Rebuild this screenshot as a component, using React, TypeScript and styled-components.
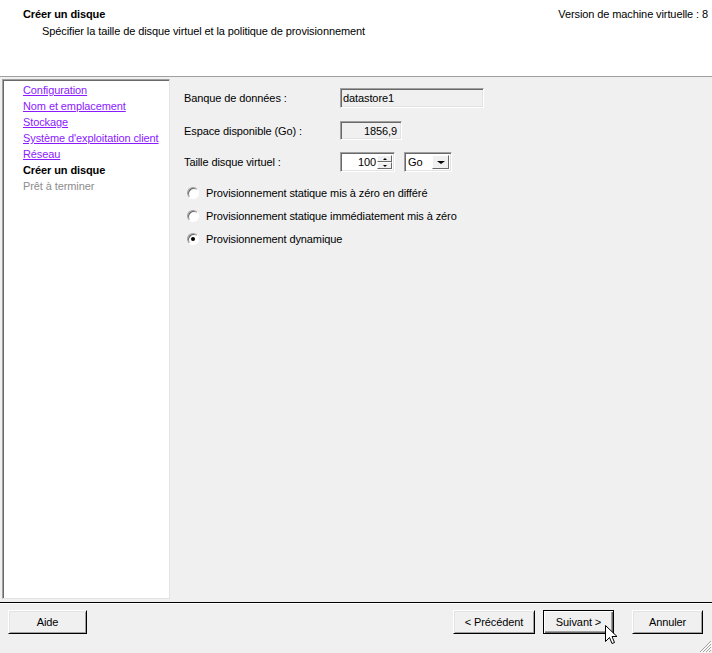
import React from 'react'
import styled, { createGlobalStyle } from 'styled-components'

const GlobalStyle = createGlobalStyle`
  html, body {
    margin: 0;
    padding: 0;
    background: #f0f0f0;
  }
  body {
    font-family: Tahoma, "Liberation Sans", Arial, sans-serif;
    font-size: 11px;
    letter-spacing: -0.1px;
    color: #000;
  }
`

const Window = styled.div`
  position: relative;
  width: 712px;
  height: 653px;
  display: flex;
  flex-direction: column;
  background: #f0f0f0;
  overflow: hidden;
`

const Header = styled.header`
  height: 77px;
  box-sizing: border-box;
  background: #fff;
  border-bottom: 1px solid #a0a0a0;
  display: flex;
  justify-content: space-between;
  align-items: flex-start;
  padding: 8px 4px 0 23px;
`

const HeaderText = styled.div`
  display: flex;
  flex-direction: column;
`

const Title = styled.div`
  font-weight: bold;
  line-height: 13px;
`

const Subtitle = styled.div`
  line-height: 13px;
  margin-top: 4px;
  padding-left: 19px;
`

const Version = styled.div`
  line-height: 13px;
`

const Body = styled.div`
  height: 525px;
  display: flex;
  padding: 2px 0 0 2px;
  box-sizing: border-box;
`

const NavPanel = styled.nav`
  width: 168px;
  height: 520px;
  box-sizing: border-box;
  background: #fff;
  border: 1px solid;
  border-color: #a0a0a0 #e3e3e3 #e3e3e3 #a0a0a0;
  box-shadow: inset 1px 1px 0 #696969;
  padding: 2px 0 0 20px;
  display: flex;
  flex-direction: column;
`

type NavState = 'done' | 'current' | 'todo'

const NavItem = styled.div<{ $state: NavState }>`
  line-height: 16px;
  white-space: nowrap;
  color: ${p => (p.$state === 'done' ? '#8b1aff' : p.$state === 'current' ? '#000' : '#8d8d8d')};
  text-decoration: ${p => (p.$state === 'done' ? 'underline' : 'none')};
  font-weight: ${p => (p.$state === 'current' ? 'bold' : 'normal')};
`

const Content = styled.section`
  flex: 1;
  padding: 9px 0 0 14px;
  display: flex;
  flex-direction: column;
`

const FieldRow = styled.div<{ $gap: number }>`
  display: flex;
  align-items: center;
  margin-bottom: ${p => p.$gap}px;
`

const Label = styled.div`
  width: 156px;
  flex-shrink: 0;
`

const Sunken = styled.div<{ $w: number; $h: number; $align?: string }>`
  width: ${p => p.$w}px;
  height: ${p => p.$h}px;
  box-sizing: border-box;
  background: #f0f0f0;
  border: 1px solid;
  border-color: #a0a0a0 #fff #fff #a0a0a0;
  box-shadow: inset 1px 1px 0 #696969, inset -1px -1px 0 #e3e3e3;
  display: flex;
  align-items: center;
  justify-content: ${p => (p.$align === 'right' ? 'flex-end' : 'flex-start')};
  padding: 0 4px 0 2px;
`

const SpinBox = styled.div`
  width: 55px;
  height: 20px;
  box-sizing: border-box;
  background: #fff;
  border: 1px solid;
  border-color: #a0a0a0 #fff #fff #a0a0a0;
  box-shadow: inset 1px 1px 0 #696969, inset -1px -1px 0 #e3e3e3;
  display: flex;
  align-items: stretch;
  padding: 2px;
`

const SpinValue = styled.div`
  flex: 1;
  text-align: right;
  line-height: 14px;
  padding-right: 1px;
`

const SpinButtons = styled.div`
  width: 15px;
  display: flex;
  flex-direction: column;
`

const SpinButton = styled.div`
  flex: 1;
  background: #f0f0f0;
  border: 1px solid;
  border-color: #fff #696969 #696969 #fff;
  display: flex;
  align-items: center;
  justify-content: center;
`

const Arrow = styled.span<{ $dir: 'up' | 'down'; $size: number }>`
  width: 0;
  height: 0;
  border-left: ${p => p.$size}px solid transparent;
  border-right: ${p => p.$size}px solid transparent;
  ${p =>
    p.$dir === 'up'
      ? `border-bottom: ${Math.ceil(p.$size / 2) + 1}px solid #000;`
      : `border-top: ${Math.ceil(p.$size / 2) + 1}px solid #000;`}
`

const Select = styled.div`
  width: 48px;
  height: 20px;
  margin-left: 9px;
  box-sizing: border-box;
  background: #fff;
  border: 1px solid;
  border-color: #a0a0a0 #fff #fff #a0a0a0;
  box-shadow: inset 1px 1px 0 #696969, inset -1px -1px 0 #e3e3e3;
  display: flex;
  align-items: stretch;
  padding: 2px;
`

const SelectValue = styled.div`
  flex: 1;
  line-height: 14px;
  padding-left: 1px;
`

const SelectButton = styled.div`
  width: 15px;
  background: #f0f0f0;
  border: 1px solid;
  border-color: #fff #696969 #696969 #fff;
  display: flex;
  align-items: center;
  justify-content: center;
`

const RadioGroup = styled.div`
  display: flex;
  flex-direction: column;
  margin-top: 9px;
  padding-left: 3px;
`

const RadioRow = styled.label`
  height: 23px;
  display: flex;
  align-items: center;
  gap: 7px;
`

const RadioCircle = styled.span<{ $checked: boolean }>`
  width: 12px;
  height: 12px;
  box-sizing: border-box;
  border-radius: 50%;
  border: 1px solid;
  border-color: #a0a0a0 #fff #fff #a0a0a0;
  background: #fff;
  box-shadow: inset 1px 1px 0 #696969;
  display: flex;
  align-items: center;
  justify-content: center;

  &::after {
    content: '';
    width: 4px;
    height: 4px;
    border-radius: 50%;
    background: #000;
    display: ${p => (p.$checked ? 'block' : 'none')};
  }
`

const Footer = styled.footer`
  position: relative;
  flex: 1;
  border-top: 1px solid #000;
  box-shadow: inset 0 1px 0 #fff;
  display: flex;
  align-items: flex-start;
  padding: 7px 9px 0 8px;
`

const Spacer = styled.div`
  flex: 1;
`

const Button = styled.div<{ $w: number; $default?: boolean; $ml?: number }>`
  width: ${p => p.$w}px;
  height: 24px;
  margin-left: ${p => p.$ml || 0}px;
  box-sizing: border-box;
  background: #f0f0f0;
  display: flex;
  align-items: center;
  justify-content: center;
  border: 1px solid;
  border-color: ${p => (p.$default ? '#000' : '#fff #000 #000 #fff')};
  box-shadow: ${p =>
    p.$default
      ? 'inset 1px 1px 0 #fff, inset -1px -1px 0 #696969, inset -2px -2px 0 #a0a0a0'
      : 'inset 1px 1px 0 #e3e3e3, inset -1px -1px 0 #a0a0a0'};
`

const Grip = styled.svg`
  position: absolute;
  right: 0;
  bottom: 0;
`

const Cursor = styled.svg`
  position: absolute;
  left: 605px;
  top: 625px;
`

const navItems: { label: string; state: NavState }[] = [
  { label: 'Configuration', state: 'done' },
  { label: 'Nom et emplacement', state: 'done' },
  { label: 'Stockage', state: 'done' },
  { label: "Système d'exploitation client", state: 'done' },
  { label: 'Réseau', state: 'done' },
  { label: 'Créer un disque', state: 'current' },
  { label: 'Prêt à terminer', state: 'todo' },
]

const radios = [
  { label: 'Provisionnement statique mis à zéro en différé', checked: false },
  { label: 'Provisionnement statique immédiatement mis à zéro', checked: false },
  { label: 'Provisionnement dynamique', checked: true },
]

const App = () => {
  return (
    <>
      <GlobalStyle />
      <Window>
        <Header>
          <HeaderText>
            <Title>Créer un disque</Title>
            <Subtitle>Spécifier la taille de disque virtuel et la politique de provisionnement</Subtitle>
          </HeaderText>
          <Version>Version de machine virtuelle : 8</Version>
        </Header>
        <Body>
          <NavPanel>
            {navItems.map(item => (
              <NavItem key={item.label} $state={item.state}>
                {item.label}
              </NavItem>
            ))}
          </NavPanel>
          <Content>
            <FieldRow $gap={13}>
              <Label>Banque de données :</Label>
              <Sunken $w={144} $h={20}>datastore1</Sunken>
            </FieldRow>
            <FieldRow $gap={12}>
              <Label>Espace disponible (Go) :</Label>
              <Sunken $w={62} $h={19} $align="right">1856,9</Sunken>
            </FieldRow>
            <FieldRow $gap={0}>
              <Label>Taille disque virtuel :</Label>
              <SpinBox>
                <SpinValue>100</SpinValue>
                <SpinButtons>
                  <SpinButton>
                    <Arrow $dir="up" $size={2} />
                  </SpinButton>
                  <SpinButton>
                    <Arrow $dir="down" $size={2} />
                  </SpinButton>
                </SpinButtons>
              </SpinBox>
              <Select>
                <SelectValue>Go</SelectValue>
                <SelectButton>
                  <Arrow $dir="down" $size={4} />
                </SelectButton>
              </Select>
            </FieldRow>
            <RadioGroup>
              {radios.map(r => (
                <RadioRow key={r.label}>
                  <RadioCircle $checked={r.checked} />
                  {r.label}
                </RadioRow>
              ))}
            </RadioGroup>
          </Content>
        </Body>
        <Footer>
          <Button $w={79}>Aide</Button>
          <Spacer />
          <Button $w={82}>&lt; Précédent</Button>
          <Button $w={71} $ml={8} $default>
            Suivant &gt;
          </Button>
          <Button $w={71} $ml={18}>
            Annuler
          </Button>
          <Grip width="13" height="13" viewBox="0 0 13 13">
            <g stroke="#a0a0a0" strokeWidth="1">
              <line x1="12" y1="1" x2="1" y2="12" />
              <line x1="12" y1="4" x2="4" y2="12" />
              <line x1="12" y1="7" x2="7" y2="12" />
              <line x1="12" y1="10" x2="10" y2="12" />
            </g>
            <g stroke="#fff" strokeWidth="1">
              <line x1="13" y1="2" x2="2" y2="13" />
              <line x1="13" y1="5" x2="5" y2="13" />
              <line x1="13" y1="8" x2="8" y2="13" />
            </g>
          </Grip>
        </Footer>
        <Cursor width="13" height="21" viewBox="0 0 13 21">
          <path
            d="M0.5 0.5 L0.5 16.5 L4.5 12.5 L7 18.5 L9.5 17.5 L7 11.5 L12 11.5 Z"
            fill="#fff"
            stroke="#000"
            strokeWidth="1"
            strokeLinejoin="miter"
          />
        </Cursor>
      </Window>
    </>
  )
}

export default App
